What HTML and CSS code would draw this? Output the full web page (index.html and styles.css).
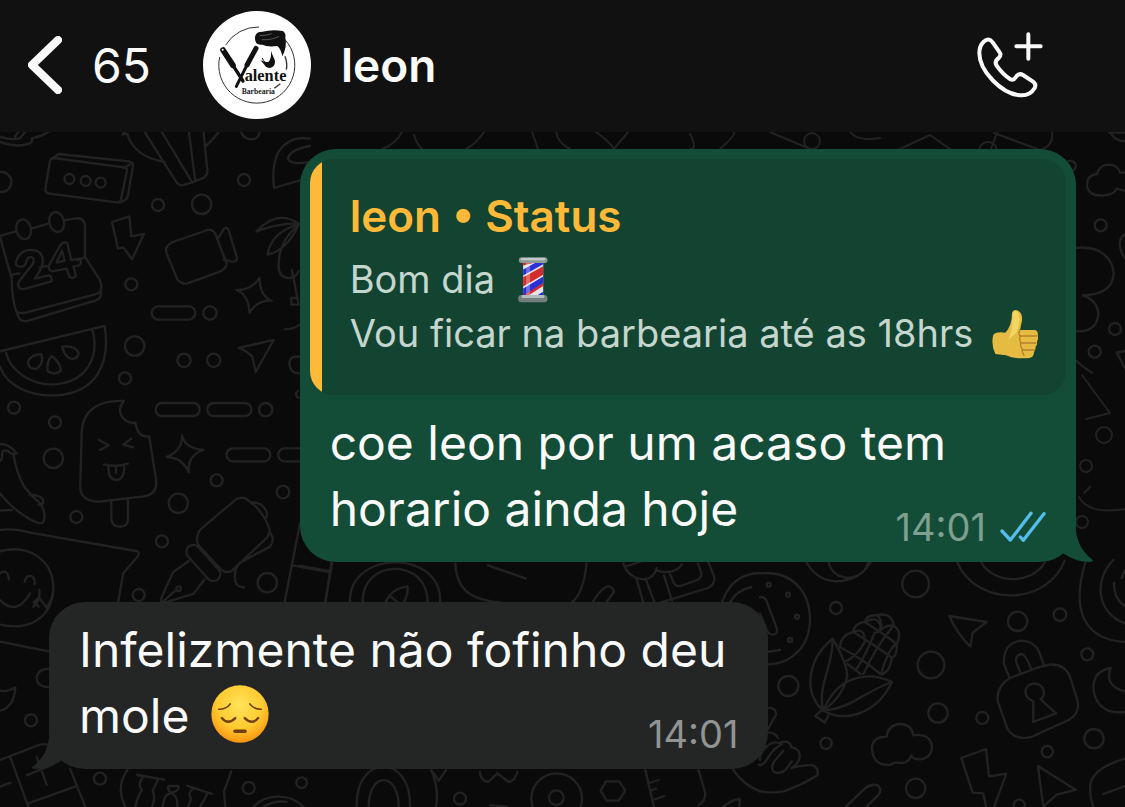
FILE: index.html
```html
<!DOCTYPE html>
<html lang="pt-BR">
<head>
    <meta charset="UTF-8">
    <meta name="viewport" content="width=device-width, initial-scale=1.0">
    <title>leon</title>
    <link rel="stylesheet" href="styles.css">
</head>
<body>
    <header class="topbar">
        <button type="button" class="back" aria-label="Voltar">
            <svg class="back-icon" viewBox="0 0 34 58" aria-hidden="true"><path d="M30 4 4 29 30 54"/></svg>
            <span>65</span>
        </button>
        <svg class="avatar" viewBox="38 18 324 324" role="img" aria-label="Valente Barbearia">
            <circle cx="200" cy="180" r="162" fill="#fff"/>
            <g fill="none" stroke="#333" stroke-width="3">
                <path d="M106 120A114 114 0 0 1 206 66"/>
                <path d="M284 104A114 114 0 1 1 88 156"/>
                <path d="M284 154q8 22 4 40M252 250l18-14" stroke-width="4"/>
            </g>
            <g fill="none" stroke="#111" stroke-linecap="round">
                <path d="M98 135l30 46" stroke-width="17"/>
                <path d="M122 172l36 56" stroke-width="10"/>
                <path d="M197 130l-27 50" stroke-width="15"/>
                <path d="M172 176l-34 68" stroke-width="9"/>
                <path d="M216 160q6 16 18 18" stroke-width="3"/>
            </g>
            <circle cx="97" cy="134" r="3" fill="#fff"/>
            <g fill="#111">
                <path d="M194 96q2-16 22-16 30-8 62-2 10 8 7 20 6 26-9 56-4-22-15-31-30 4-45-4-24 3-22-23z"/>
                <path d="M210 165q14 8 25 5 9-10 7-32 6 16 11 26 4 16-8 23-16 6-24-9z"/>
            </g>
            <path d="M214 104q30 2 52-10M208 92q20 0 36-6" fill="none" stroke="#777" stroke-width="2"/>
            <text class="logo-name" x="163" y="227">alente</text>
            <text class="logo-sub" x="154" y="266">Barbearia</text>
        </svg>
        <h1 class="contact">leon</h1>
        <button type="button" class="call" aria-label="Ligar">
            <svg viewBox="83 61 198 198" aria-hidden="true">
                <path d="M103 90Q118 76 130 92L151 122Q157 130 148 139 134 149 142 162 160 188 182 202 192 208 198 198 208 182 221 190L250 209Q262 217 256 229 240 256 206 250C158 244 90 180 90 124Q90 102 103 90Z"/>
                <path d="M237 68v73M201 104h73"/>
            </svg>
        </button>
    </header>

    <main class="chat">
        <svg class="doodles" viewBox="0 132 1125 675" preserveAspectRatio="xMinYMin slice" aria-hidden="true">
            <!-- left side, upper half -->
            <g transform="translate(0 130) scale(.3333)">
                <path d="M0 35q50 20 90 5 10-8 5-15 30-5 60-25M0 20q30 12 60 5l20-25M45 20l15-20"/>
                <circle cx="4" cy="156" r="30"/>
                <path d="M150 92q2-8 12-8l210 28q10 2 9 10l-18 86q-2 10-12 9l-202-26q-14-2-13-14zM155 86l22-14 210 22q14 2 12 14l-16 92q-4 12-24 17M372 114l25-15"/>
                <circle cx="208" cy="147" r="15"/><circle cx="257" cy="153" r="15"/><circle cx="302" cy="158" r="15"/>
                <path d="M368 12l14 0q20 68 112 84M430 0l94 148q12 24 32 16l50-18q18-8 16-26l-12-120M482 0l95 158M566 0l20 154M655 8q-16 20-35 38M368 14l12-14M720 0q10 28 34 28t26-28"/>
                <circle cx="732" cy="150" r="18"/><circle cx="474" cy="225" r="18"/><circle cx="605" cy="223" r="29"/>
                <path d="M930 26q-60-10-92 36-24 40-16 112l108-32M930 48q-60 10-66 38 6 20 66 10"/>
                <path d="M0 318l48-14M94 296l54-16M192 271l36-6q24-2 27 22v94l44 68q8 16 4 34 4 24-20 30l-200 60q-24 4-30-18-18-40-18-110L0 322M255 381l-22 10M38 434l20-4M120 412l20-4M50 545q10 8 30 2l205-54q20-4 18-24"/>
                <ellipse cx="71" cy="298" rx="22" ry="30" transform="rotate(-14 71 298)"/>
                <ellipse cx="170" cy="276" rx="22" ry="30" transform="rotate(-14 170 276)"/>
                <path d="M62 410q-20 0-12-20 12-32 48-30 34 4 30 40-4 20-24 46l42-10q12 2 8 18l-80 23q-24 4-18-22l42-52q8-18-4-22-14 0-16 18-4 12-16 11zM202 340l12 50 24-4q10 8 0 20l-18 4 8 26q-6 12-20 4l-8-24-46 8q-12-6-6-20l34-60q10-12 20-4zM186 362l-16 36 24-6z"/>
                <path d="M336 276l52-17 6 60 38-7-36 76-26-36-16 4z"/>
                <circle cx="394" cy="463" r="18"/>
                <path d="M498 360q0-12 16-22l108-38q16-4 24 12l34 88q0 14-18 24l-100 36q-18 4-30-12l-32-78zM652 328l20-32q8-6 14 4l25 84q0 12-14 11l-26-6"/>
                <path d="M770 304q60-66 126-24-64 0-126 24M896 284q-80 20-94 90 60-14 94-90-60 50-60 120-2 40 34 40 20-4 26-20M876 420l20 104-22 0v-20h20M855 598q24 0 44-14"/>
                <path d="M779 444q0 54 36 68-44-2-66 36-4-56-40-68 44 2 70-36z"/>
                <rect x="455" y="529" width="131" height="40" rx="20"/><circle cx="630" cy="549" r="20"/>
                <circle cx="404" cy="648" r="29"/><circle cx="552" cy="691" r="20"/><circle cx="641" cy="691" r="20"/>
                <path d="M716 654l105-24-54 96-10-46q-20-20-41-26z"/>
                <path d="M900 680q-32-4-32 22 4 30 32 28"/>
                <path d="M0 664l314-76C332 700 290 788 170 796 90 800 20 768 0 710M277 598C300 680 260 760 160 763 90 766 30 720 18 668"/>
                <path d="M124 672q8 30-14 44-26 4-26-22 10-20 40-22zM155 678q26 20 28 44-16 16-40 2-4-28 12-46zM186 650q42-4 50 20-4 20-24 16-16-4-26-36z"/>
            </g>
            <!-- left side, lower half -->
            <g transform="translate(0 360) scale(.3333)">
                <circle cx="375" cy="55" r="18"/><circle cx="42" cy="143" r="18"/><circle cx="165" cy="187" r="18"/><circle cx="160" cy="295" r="29"/><circle cx="229" cy="471" r="18"/>
                <rect x="467" y="129" width="132" height="39" rx="19"/><rect x="622" y="129" width="132" height="39" rx="19"/><circle cx="797" cy="149" r="20"/>
                <rect x="680" y="265" width="131" height="39" rx="19"/><rect x="835" y="265" width="131" height="39" rx="19"/>
                <path d="M372 123q-24 30 0 54 16 14 30 12 4-6 6 6 6 38 40 34l20 130q6 44-36 50l-134 16q-60 0-57-50l4-160c4-70 60-96 127-92zM334 420v56q2 24 26 24t24-24v-62M297 240l29 16-26 14M394 236l-24 18 30 8M312 314q40 8 72-3M325 320q0 40 24 40t24-42M348 322v16"/>
                <path d="M546 226q10 40 64 44-48 16-44 67-18-44-66-46 48-20 46-65z"/>
                <circle cx="650" cy="361" r="18"/><circle cx="535" cy="430" r="29"/><circle cx="849" cy="396" r="19"/><circle cx="486" cy="544" r="18"/><circle cx="802" cy="668" r="29"/><circle cx="416" cy="705" r="18"/>
                <path d="M0 252q30 0 50 28-20 4-24-6-20-8-20 10 2 14-6 18M40 282q10 60 34 100 20 26 48 50 18 30 8 54-8 12-50-14Q30 440 0 400M88 404q40 0 42 22-2 10-14 8M0 452l36-2"/>
                <path d="M0 510q40-6 90 8l318 55q16 4 2 20l-40 46-16 90M0 574c90-24 160 30 160 110q0 30-20 60M0 640q22-16 27 18M74 666q4-20 18-18 14 4 12 24M118 690q4 30-18 50M102 728l14-16 22 28M116 740l-14-14"/>
                <path d="M594 524q-8 20 4 34l64 70q16 14 34 4l104-98q14-18 6-34-20-50-60-78-16-16-38-4l-104 88q-8 6-10 18zM752 428q32-4 46 24 6 12 0 22M812 520q14 20-2 40l-90 48q-20 20-14 56 6 18 26 18"/>
                <rect x="544" y="588" width="132" height="42" rx="21" transform="rotate(48 610 609)"/>
                <path d="M566 604l-46 32q-20 40-38 84 0 10 20 6l78-24 34-44M490 724l38-34"/><circle cx="536" cy="686" r="7"/>
                <path d="M900 490l-46 236M878 616l110 20M1002 560l-26 166M895 92q-14 10 0 22"/>
            </g>
            <!-- strip under the header -->
            <path d="M402 132q-6 12-20 17M414 135q2 8 8 14M532 132l6 17M484 132q-8 12-18 17M570 149q-12-6-14-17M596 132q14 10 18 17M628 132l-14 17M690 134q8 16 0 15M720 149q16-14 14-17M770 132l40 17M850 132q8 10 30 6M900 149l30-14 20 14M997 133l-6 16M994 133l46 17q14-4 12-18"/>
            <circle cx="988" cy="151" r="9"/><circle cx="812" cy="141" r="8"/>
            <!-- right edge -->
            <g transform="translate(980 130) scale(.3333)">
                <path d="M388 0q14 36 52 34M388 8h50M262 94q24-6 26 16-4 12-14 12M440 128h-20q-6-24-36-24-28 2-32 28-36 4-30 40 8 28 50 24 30-2 38-20l30 8"/>
                <circle cx="362" cy="286" r="18"/><circle cx="405" cy="597" r="18"/><circle cx="344" cy="665" r="18"/>
                <path d="M285 354c80-10 116 36 116 80q-6 60-92 62 46 16 46 60-8 54-72 47M440 310q-24 10-20 40 4 24 20 40M440 662l-30 6 30 56M286 690q20 20 50 38"/>
            </g>
            <path d="M1082 375l28 38-24 6M1079 497q10 18 46 12M1084 493l6-6"/>
            <circle cx="1082" cy="522" r="6"/><circle cx="1104" cy="435" r="8"/><circle cx="1086" cy="466" r="6"/>
            <!-- between the two bubbles -->
            <g transform="translate(300 550) scale(.3333)">
                <path d="M0 48l86 15M96 40L76 157M150 157c-6-160 280-160 270 0M188 157c-2-134 196-134 195 0M256 157l12-20q20-24 54-28 4 20-10 48M268 137l26 20M466 40c4 90 60 110 134 118M564 46l114 40M860 40q-10 90-44 117M878 157q30-50 50-48 20 10 10 22l-20 28M970 40q16 46 62 48 30-2 38-34M976 50l60-20M1010 88l20 70M1038 90l26 68M1070 62q50 14 76-18M1092 76l24 76M1110 72l12 28q6 10 20 8l50-18q14-6 12-22l-10-28M1224 34l18 44q6 24-18 36l-150 46M1266 157q30-86 114-88M1290 157q20-36 64-46"/>
            </g>
            <!-- bottom right -->
            <g transform="translate(760 560) scale(.3333)">
                <path d="M0 40c100-10 150 60 150 140-2 90-70 142-144 132M0 112q14-4 20 12l30 80q4 20-12 20-14 0-20-20L0 160M18 276l42-6"/>
                <circle cx="26" cy="74" r="6"/><circle cx="84" cy="104" r="6"/><circle cx="111" cy="170" r="6"/><circle cx="90" cy="240" r="6"/>
                <path d="M136 0q30 60 90 64 70 0 106-56M206 8q10 40 58 46 50-6 60-46"/>
                <circle cx="467" cy="72" r="40"/><circle cx="228" cy="144" r="18"/><circle cx="85" cy="378" r="30"/><circle cx="513" cy="315" r="40"/><circle cx="534" cy="459" r="29"/><circle cx="667" cy="474" r="18"/><circle cx="773" cy="184" r="29"/><circle cx="900" cy="164" r="19"/><circle cx="982" cy="283" r="18"/><circle cx="1002" cy="536" r="29"/><circle cx="862" cy="575" r="17"/><circle cx="198" cy="550" r="17"/><circle cx="467" cy="685" r="29"/><circle cx="778" cy="736" r="17"/>
                <path d="M592 8c60 134 270 130 322-6M664 8c40 66 150 66 190 0M976 8C930 160 980 240 1095 246M1060 0c-60 60-50 160 35 190M1095 30l-10 24M1062 68q0 50 33 70"/>
                <path d="M568 168l112 18-42 32-7 42q-40-40-63-92z"/>
                <!-- corn -->
                <path d="M190 452C130 400 140 300 218 236q40 66 44 110-10 60-72 106zM190 452C170 380 220 320 218 236M190 452C230 350 320 330 396 366 350 460 260 490 190 452zM190 452c90-10 110-50 206-86M186 450l-20 18 28 20 14-26"/>
                <path d="M240 262q2-36 40-46 2-26 34-30 6-22 36-20 44-12 52 32 26 18 8 54 2 34-14 42-6 40-30 50M240 262q60 30 122 80M280 216q80 50 116 78M314 186q70 44 96 66M316 186q36-22 46 14-2 18-18 18M362 210q20-18 40-12M350 166q14 8 14 36M280 216q36-16 34 30-20 40-56 58M344 218q-24 62-56 112M398 200q-50 60-88 142M408 250q-30 30-44 92M262 312q20 14 40 30"/>
                <!-- padlock -->
                <path d="M750 354l80-30 38-10q44-4 62 36l22 70q10 40-26 60l-110 50q-50 14-74-24l-28-80q-8-44 36-72zM748 352l-16-40q-4-60 48-70 44 0 58 36l14 38M782 340l-14-36q0-22 18-22 12 4 28 46M820 424c-34-14-30-52 4-54 32 4 34 38 18 48l46 42-68 26z"/>
                <path d="M1052 324q-60 12-50 74 16 66 93 58M1052 324q-20 54 43 70"/>
                <!-- cloud -->
                <path d="M380 530q-44 0-44 36 4 54 56 48 20-10 22-6 30 6 40-22 4 12 26 12 36-4 36-40-8-40-56-32-6-34-40-34-36 2-40 38z"/>
                <path d="M604 594l74-27 9 82 52-8-36 98M604 594l34 104 32 2 8 40M834 618l114 72-58 14-40 36zM1095 596q-100 30-104 80-2 40 10 64M1030 702l65-24"/>
                <!-- hand -->
                <path d="M18 444q30-4 30 20l-26 46M0 600q-4-16 16-36 20-26 50-12-26 14-40 38-16 30-30 24M60 548q30-10 34 14M94 562q30 4 24 36-10 20-24 26 40-10 64-8 20 10 14 30-40 26-100 48-40 6-72 0M10 520q30-10 44 14M96 604l-20 26q-20 16-36 4-10-12 6-34l24-28M258 740l56-54q20-16 40-10 14 16 0 30l-34 34"/>
            </g>
            <!-- bottom left -->
            <g transform="translate(0 590) scale(.3333)">
                <path d="M0 155l150 30M0 30q50 50 90-20M150 236q-38 0-40 30 4 26 40 26M0 302q20 6 46-10-4 60-46 70M0 510l120-46q20-4 40 4M30 500l55 150M85 640l140-50M0 590l32-12M210 536l46 114M80 556l78-32M110 500l30 84M0 104c90 20 150-20 160-100"/>
                <circle cx="93" cy="391" r="18"/><circle cx="300" cy="566" r="18"/><circle cx="746" cy="594" r="18"/><circle cx="905" cy="578" r="16"/>
                <path d="M382 540q-36 50-6 110M412 555l80 14M430 560q-20 24-4 40-14 20-20 50M474 566q-6 20-16 36 10 20-2 48M505 588h30q4 14-20 20-14-6-10-20zM488 650q4-40 26-40 20 6 18 40M562 588l74 24M580 596q-20 14-6 30l-10 24M622 610q-8 20-22 40M694 544l-22 60 4 46M760 650c40-40 110-40 150 0M790 650q40-20 70-14"/>
            </g>
            <!-- bottom middle -->
            <g transform="translate(400 740) scale(.3333)">
                <path d="M94 90q24 60 14 110M100 98l16 24 22-32M240 96q0 24 24 30l28-26 34 26q20-4 26-30M736 90l26 110M744 130l32-10M752 152l16-6M764 178l28-10M896 90l20 70q0 24-20 36M602 152l16-28h40l18 28-20 30h-36zM270 196l50 4M1000 90q30 44 80 64M970 200q30-24 50-22l-2 22"/>
                <circle cx="180" cy="176" r="18"/><circle cx="470" cy="176" r="76"/><circle cx="469" cy="173" r="22"/><path d="M-130 200c-4-160 164-160 160 0M-94 200c0-106 90-106 90 0"/>
            </g>
        </svg>

        <article class="bubble bubble-out">
            <blockquote class="quote">
                <cite class="quote-title">leon • Status</cite>
                <p>Bom dia <svg class="emoji-pole" viewBox="686 350 90 140" role="img" aria-label="💈">
                        <rect x="701" y="368" width="61" height="102" fill="#e4e4ee"/>
                        <path d="M701 376l30-8h-30zM701 412l61-34v26l-61 36zM712 470l50-32v-10l-61 36v6z" fill="#d42c2c"/>
                        <path d="M701 388l36-20h25v4l-61 34zM701 446l61-37v20l-61 38zM738 470l24-14v14z" fill="#2b2fd6"/>
                        <path d="M710 368h12v102h-12z" fill="#fff" opacity=".3"/>
                        <rect x="688" y="351" width="87" height="17" rx="8" fill="#8e9a98"/>
                        <rect x="694" y="353" width="74" height="7" rx="3" fill="#c3ccca"/>
                        <rect x="686" y="466" width="89" height="22" rx="10" fill="#737f7c"/>
                        <rect x="696" y="466" width="70" height="9" rx="4" fill="#b3bdbb"/>
                    </svg></p>
                <p>Vou ficar na barbearia até as 18hrs <svg class="emoji-thumb" viewBox="34 536 138 148" role="img" aria-label="👍">
                        <path d="M38 612q10-10 36-6 20-20 20-58 4-14 18-8 14 6 12 30l-6 28h46q10 4 7 16 4 10-2 18 2 10-4 16 0 10-5 16 0 16-14 18-46 4-70-8l-32-4q-14-28-6-58z" fill="#e6bb42"/>
                        <path d="M96 546q10-10 18 2 8 24-8 60l-24 20q16-32 14-82z" fill="#f3d565"/>
                        <path d="M118 598q-6 10 0 18-4 10 2 20-2 10 4 18 0 12 6 20M120 616h48M122 637h44M126 658h36" fill="none" stroke="#b5812a" stroke-width="4" stroke-linecap="round"/>
                    </svg></p>
            </blockquote>
            <div class="message">
                <p class="text">coe leon por um acaso tem<br>horario ainda hoje</p>
                <div class="meta">
                    <time>14:01</time>
                    <svg class="ticks" viewBox="364 60 138 93" role="img" aria-label="Lida"><path d="M370 120l25 27 62-80M425 138l9 10 62-80"/></svg>
                </div>
            </div>
            <svg class="tail" viewBox="520 91 120 126" aria-hidden="true"><path d="M587 91C587 150 602 182 640 212Q641 217 630 217 590 217 552 192L520 170V91Z"/></svg>
        </article>

        <article class="bubble bubble-in">
            <div class="message">
                <p class="text">Infelizmente não fofinho deu<br>mole <svg class="emoji-face" viewBox="0 0 172 172" role="img" aria-label="😔">
                        <defs>
                            <radialGradient id="face" cx=".5" cy=".35" r=".65">
                                <stop offset="0" stop-color="#ffe35a"/>
                                <stop offset=".6" stop-color="#ffcb31"/>
                                <stop offset="1" stop-color="#f7960f"/>
                            </radialGradient>
                        </defs>
                        <circle cx="86" cy="86" r="85" fill="url(#face)"/>
                        <g fill="none" stroke="#6f3f0c" stroke-linecap="round">
                            <path d="M23 72Q46 72 57 56M115 56q11 16 34 16" stroke-width="5"/>
                            <path d="M32 98q18 22 40 0M100 98q22 22 40 0" stroke-width="7"/>
                            <path d="M71 137h30" stroke-width="10"/>
                        </g>
                    </svg></p>
                <div class="meta">
                    <time>14:01</time>
                </div>
            </div>
            <svg class="tail" viewBox="520 91 120 126" aria-hidden="true"><path d="M587 91C587 150 602 182 640 212Q641 217 630 217 590 217 552 192L520 170V91Z"/></svg>
        </article>
    </main>
</body>
</html>
```

FILE: styles.css
```css
* {
    box-sizing: border-box;
    margin: 0;
    padding: 0;
}
body {
    display: flex;
    flex-direction: column;
    min-height: 100vh;
    background: #0a0a0a;
    color: #fafafa;
    font-family: Inter, "Liberation Sans", sans-serif;
}
button {
    background: none;
    border: none;
    color: inherit;
    font: inherit;
    cursor: pointer;
}
svg {
    display: block;
}

/* Header */
.topbar {
    display: flex;
    align-items: center;
    height: 132px;
    padding: 0 82px 2px 28px;
    background: #111111;
}
.back {
    display: flex;
    align-items: center;
    gap: 30px;
    font-size: 48px;
}
.back-icon {
    width: 34px;
    height: 58px;
    fill: none;
    stroke: #fafafa;
    stroke-width: 8;
    stroke-linecap: round;
    stroke-linejoin: round;
}
.avatar {
    width: 108px;
    height: 108px;
    margin: 0 30px 0 52px;
}
.logo-name {
    font: bold 49px "Liberation Serif", serif;
    fill: #111;
}
.logo-sub {
    font: bold 23px "Liberation Serif", serif;
    fill: #222;
}
.contact {
    font-size: 46px;
    font-weight: 600;
}
.call {
    margin-left: auto;
}
.call svg {
    width: 66px;
    height: 66px;
    fill: none;
    stroke: #fafafa;
    stroke-width: 12;
    stroke-linecap: round;
    stroke-linejoin: round;
}

/* Conversation */
.chat {
    position: relative;
    flex: 1;
    display: flex;
    flex-direction: column;
    gap: 40px;
    padding: 17px 49px 38px;
    overflow: hidden;
}
.doodles {
    position: absolute;
    top: 0;
    left: 0;
    width: 100%;
    height: 100%;
    fill: none;
    stroke: #222222;
    stroke-width: 2;
    stroke-linecap: round;
    stroke-linejoin: round;
}
.doodles g {
    stroke-width: 7;
}
.bubble {
    position: relative;
    max-width: 90%;
    padding-bottom: 20px;
    border-radius: 36px;
}
.bubble-out {
    align-self: flex-end;
    padding-top: 10px;
    background: #144d37;
    fill: #144d37;
}
.bubble-in {
    align-self: flex-start;
    background: #242626;
    fill: #242626;
}
.tail {
    position: absolute;
    right: -17px;
    bottom: 0;
    width: 40px;
    height: 42px;
}
.bubble-in .tail {
    right: auto;
    left: -17px;
    transform: scaleX(-1);
}
.quote {
    position: relative;
    overflow: hidden;
    margin: 0 10px;
    padding: 21px 28px 35px 40px;
    border-radius: 24px;
    background: #124431;
    color: #c4d6cd;
    font-size: 38px;
    line-height: 54px;
}
.quote::before {
    content: "";
    position: absolute;
    top: 0;
    bottom: 0;
    left: 0;
    width: 12px;
    background: #ffb938;
}
.quote-title {
    display: block;
    color: #ffb938;
    font-size: 44px;
    font-style: normal;
    font-weight: 600;
    line-height: 72px;
}
.quote svg,
.text svg {
    display: inline-block;
}
.emoji-pole {
    width: 30px;
    height: 46px;
    margin-left: 12px;
    vertical-align: -10px;
}
.emoji-thumb {
    width: 46px;
    height: 50px;
    margin-left: 8px;
    vertical-align: -12px;
}
.message {
    display: grid;
    padding: 15px 30px 0;
}
.text,
.meta {
    grid-area: 1 / 1;
}
.text {
    padding-right: 12px;
    font-size: 48px;
    line-height: 66px;
}
.emoji-face {
    width: 58px;
    height: 58px;
    margin-left: 8px;
    vertical-align: -10px;
}
.meta {
    display: flex;
    align-items: center;
    align-self: end;
    justify-self: end;
    gap: 14px;
    color: #7f9f90;
    font-size: 38px;
    line-height: 30px;
}
.bubble-in .meta {
    color: #929393;
}
.ticks {
    width: 46px;
    height: 31px;
    fill: none;
    stroke: #53bdeb;
    stroke-width: 10;
    stroke-linecap: round;
    stroke-linejoin: round;
}
```
